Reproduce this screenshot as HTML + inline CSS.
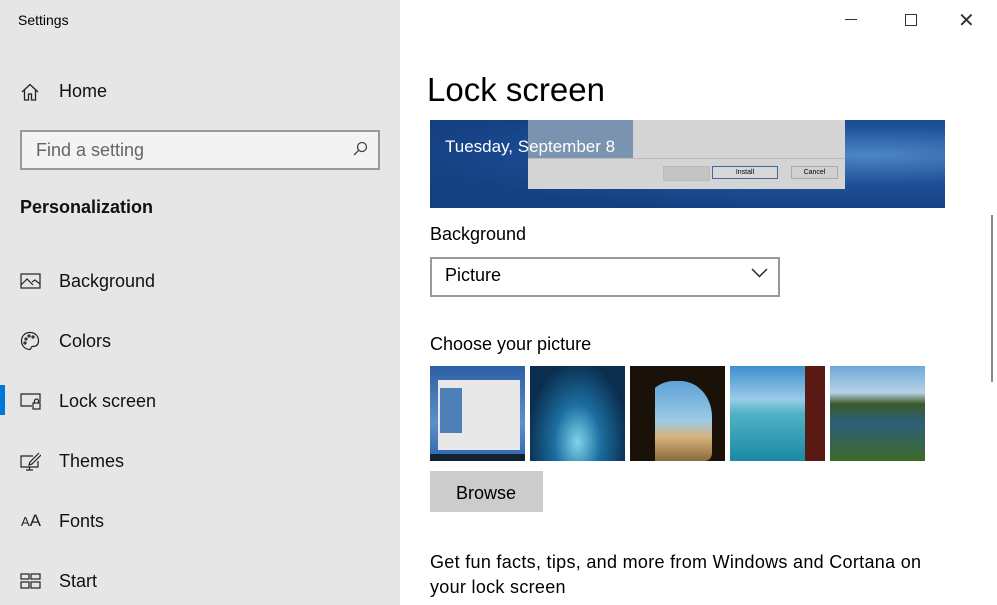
<!DOCTYPE html>
<html><head><meta charset="utf-8"><style>
body{margin:0;width:997px;height:605px;overflow:hidden;font-family:"Liberation Sans",sans-serif;background:#fff;position:relative}
.side{position:absolute;left:0;top:0;width:400px;height:605px;background:#e6e6e6}
.t{position:absolute;white-space:nowrap;color:#000}
.nav{position:absolute;left:59px;font-size:18px;color:#111}
.ic{position:absolute;left:20px}
.thumb{position:absolute;top:366px;width:95px;height:95px;overflow:hidden}
</style></head><body>
<div class="side">
<div class="t" style="left:18px;top:12px;font-size:14px">Settings</div>
<svg class="ic" style="top:82px" width="20" height="20" viewBox="0 0 20 20" fill="none" stroke="#222" stroke-width="1.3"><path d="M2 10L10 2.5 18 10M4.5 8v10h4v-6h3v6h4V8"/></svg>
<div class="nav" style="top:81px">Home</div>
<div style="position:absolute;left:20px;top:130px;width:356px;height:36px;border:2px solid #999;background:#f3f3f3"></div>
<div class="t" style="left:36px;top:140px;font-size:18px;color:#666">Find a setting</div>
<svg style="position:absolute;left:352px;top:141px" width="16" height="16" fill="none" stroke="#444" stroke-width="1.3"><circle cx="10" cy="6" r="4.5"/><path d="M7 9L2 14"/></svg>
<div class="t" style="left:20px;top:197px;font-size:18px;font-weight:bold;color:#111">Personalization</div>
<svg class="ic" style="top:272px" width="21" height="18" fill="none" stroke="#222" stroke-width="1.2"><rect x="1" y="2" width="19" height="14"/><path d="M1 13l6-6 6 6M12 10l3-2 5 4"/></svg>
<div class="nav" style="top:271px">Background</div>
<svg class="ic" style="top:331px" width="21" height="20" fill="none" stroke="#222" stroke-width="1.2"><path d="M10 1.5C5 1.5 1.5 5 1.5 10c0 5 4 8.5 8 8.5 2 0 1-3 3-3 3 0 6-1 6-5.5C18.5 5 15 1.5 10 1.5z"/><circle cx="6" cy="8" r="1"/><circle cx="9" cy="5" r="1"/><circle cx="13" cy="6" r="1"/><circle cx="5" cy="12" r="1"/></svg>
<div class="nav" style="top:331px">Colors</div>
<div style="position:absolute;left:0;top:385px;width:5px;height:30px;background:#0078d7"></div>
<svg class="ic" style="top:392px" width="21" height="18" fill="none" stroke="#222" stroke-width="1.2"><path d="M12 14H1V2h19v8"/><rect x="13" y="11" width="7" height="6"/><path d="M14.5 11V9a2 2 0 014 0v2"/></svg>
<div class="nav" style="top:391px">Lock screen</div>
<svg class="ic" style="top:452px" width="21" height="20" fill="none" stroke="#222" stroke-width="1.2"><path d="M13 4H1v11h17V9M6 18h7M9.5 15v3M19 1L10 10l-1 3 3-1 9-9"/></svg>
<div class="nav" style="top:451px">Themes</div>
<div class="t" style="left:21px;top:511px;font-size:13px;color:#222">A<span style="font-size:17px">A</span></div>
<div class="nav" style="top:511px">Fonts</div>
<svg class="ic" style="top:573px" width="21" height="16" fill="none" stroke="#222" stroke-width="1.2"><rect x="1" y="1" width="8" height="5"/><rect x="11" y="1" width="9" height="5"/><rect x="1" y="9" width="8" height="6"/><rect x="11" y="9" width="9" height="6"/></svg>
<div class="nav" style="top:571px">Start</div>
</div>
<div class="t" style="left:845px;top:19px;width:12px;height:1px;background:#333"></div>
<div style="position:absolute;left:905px;top:14px;width:10px;height:10px;border:1px solid #333"></div>
<div class="t" style="left:958px;top:8px;font-size:20px;color:#333">✕</div>
<div class="t" style="left:427px;top:71px;font-size:33px;color:#000">Lock screen</div>
<div style="position:absolute;left:430px;top:120px;width:515px;height:88px;background:radial-gradient(ellipse at 85% 40%,#4d86c6,#1d4f96 40%,#143f80 80%);overflow:hidden">
<div style="position:absolute;left:98px;top:0;width:317px;height:69px;background:#d4d4d4"></div>
<div style="position:absolute;left:98px;top:0;width:105px;height:38px;background:#7a93b0"></div>
<div style="position:absolute;left:98px;top:38px;width:317px;height:1px;background:#bbb"></div>
<div style="position:absolute;left:233px;top:46px;width:45px;height:13px;background:#c4c4c4;border:1px solid #bbb"></div>
<div style="position:absolute;left:282px;top:46px;width:64px;height:11px;background:#d8d8d8;border:1px solid #3a6aa0;font-size:7px;text-align:center;line-height:11px">Install</div>
<div style="position:absolute;left:361px;top:46px;width:45px;height:11px;background:#d0d0d0;border:1px solid #aaa;font-size:7px;text-align:center;line-height:11px">Cancel</div>
<div class="t" style="left:15px;top:17px;font-size:17px;color:#fff">Tuesday, September 8</div>
</div>
<div class="t" style="left:430px;top:224px;font-size:18px">Background</div>
<div style="position:absolute;left:430px;top:257px;width:346px;height:36px;border:2px solid #999"></div>
<div class="t" style="left:445px;top:265px;font-size:18px">Picture</div>
<svg style="position:absolute;left:751px;top:268px" width="17" height="10" fill="none" stroke="#222" stroke-width="1.4"><path d="M1 1l7.5 7.5L16 1"/></svg>
<div class="t" style="left:430px;top:334px;font-size:18px">Choose your picture</div>
<div class="thumb" style="left:430px;background:linear-gradient(#2d5fa5,#5f8fc9 60%,#2a63b0)"><div style="position:absolute;left:8px;top:14px;width:82px;height:70px;background:#e8e8e8"></div><div style="position:absolute;left:10px;top:22px;width:22px;height:45px;background:#4e7fb6"></div><div style="position:absolute;left:0;top:88px;width:95px;height:7px;background:#123"></div></div>
<div class="thumb" style="left:530px;background:radial-gradient(ellipse at 50% 80%,#7fd4ea,#1b6ea0 35%,#0b2e4e 75%)"></div>
<div class="thumb" style="left:630px;background:#1a1108"><div style="position:absolute;left:12px;top:15px;width:70px;height:80px;border-radius:45% 45% 10% 10%;background:linear-gradient(#5ea2d6,#9ccbe6 50%,#d6b27a 70%,#8a6a3c)"></div><div style="position:absolute;left:0;top:0;width:25px;height:95px;background:#1a1108"></div></div>
<div class="thumb" style="left:730px;background:linear-gradient(#3d8fcf,#9bcbe8 35%,#4fb2c4 50%,#1b8aa5)"><div style="position:absolute;right:0;top:0;width:20px;height:95px;background:#5a1a14"></div></div>
<div class="thumb" style="left:830px;background:linear-gradient(#6fa8d8,#b8d2e6 28%,#3c5a2a 40%,#2d5f7a 60%,#3d6a28)"></div>
<div style="position:absolute;left:430px;top:471px;width:113px;height:41px;background:#ccc"></div>
<div class="t" style="left:456px;top:483px;font-size:18px">Browse</div>
<div class="t" style="left:430px;top:550px;font-size:18px;line-height:25px;letter-spacing:0.3px">Get fun facts, tips, and more from Windows and Cortana on<br>your lock screen</div>
<div style="position:absolute;left:991px;top:215px;width:2px;height:167px;background:#888"></div>
</body></html>
